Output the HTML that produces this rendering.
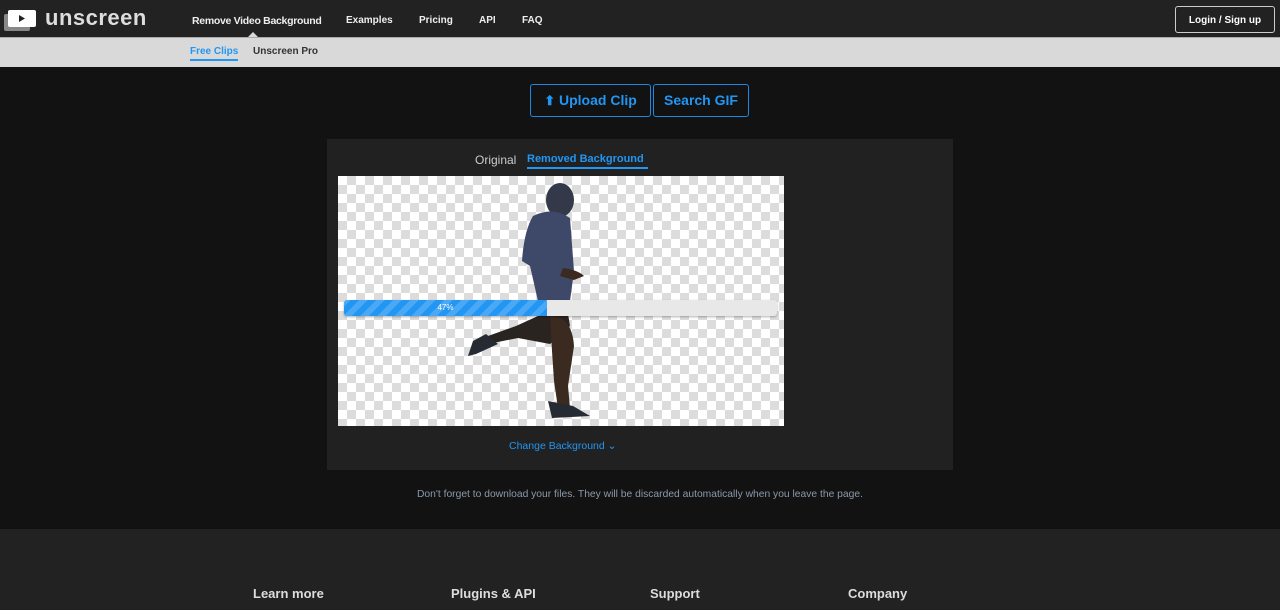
<!DOCTYPE html>
<html><head><meta charset="utf-8"><style>
*{margin:0;padding:0;box-sizing:border-box}
body{width:1280px;height:610px;overflow:hidden;background:#121212;font-family:"Liberation Sans",sans-serif;position:relative}
.top{position:absolute;left:0;top:0;width:1280px;height:37px;background:#222}
.sub{position:absolute;left:0;top:37px;width:1280px;height:30px;background:#d9d9d9;border-top:1px solid #aaa}
.a{position:absolute;font-size:10px;font-weight:bold;white-space:nowrap}
.panel{position:absolute;left:327px;top:139px;width:626px;height:331px;background:#212121}
.img{position:absolute;left:338px;top:176px;width:446px;height:250px;background-color:#fff;
background-image:linear-gradient(45deg,#dcdcdc 25%,transparent 25%,transparent 75%,#dcdcdc 75%),linear-gradient(45deg,#dcdcdc 25%,transparent 25%,transparent 75%,#dcdcdc 75%);
background-size:18px 18px;background-position:0 0,9px 9px;overflow:hidden}
.btn{position:absolute;top:84px;height:33px;border:1px solid #1e88e5;border-radius:3px;color:#2196f3;font-size:14px;font-weight:bold;line-height:31px;text-align:center}
.foot{position:absolute;left:0;top:529px;width:1280px;height:81px;background:#222}
.fh{position:absolute;top:586px;color:#ddd;font-size:13px;font-weight:bold}
</style></head><body>
<div class="top"></div>
<svg style="position:absolute;left:4px;top:9px" width="34" height="22"><rect x="0" y="5" width="26" height="17" rx="2" fill="#888"/><rect x="4" y="1" width="28" height="17" rx="2" fill="#fff"/><path d="M15 6l6 3.5-6 3.5z" fill="#222"/></svg>
<div class="a" style="left:45px;top:5px;font-size:22px;color:#ddd;letter-spacing:0.5px">unscreen</div>
<div class="a" style="left:192px;top:15px;color:#eee;font-size:10.5px;letter-spacing:-0.3px">Remove Video Background</div>
<div class="a" style="left:346px;top:15px;color:#eee">Examples</div>
<div class="a" style="left:419px;top:15px;color:#eee">Pricing</div>
<div class="a" style="left:479px;top:15px;color:#eee">API</div>
<div class="a" style="left:522px;top:15px;color:#eee">FAQ</div>
<div style="position:absolute;left:248px;top:32px;width:0;height:0;border:5px solid transparent;border-bottom-color:#d9d9d9;border-top:0"></div>
<div style="position:absolute;left:1175px;top:6px;width:100px;height:27px;border:1px solid #ccc;border-radius:3px;color:#fff;font-size:10px;font-weight:bold;text-align:center;line-height:27px">Login / Sign up</div>
<div class="sub"></div>
<div class="a" style="left:190px;top:46px;color:#2196f3">Free Clips</div>
<div style="position:absolute;left:190px;top:59px;width:48px;height:2px;background:#2196f3"></div>
<div class="a" style="left:253px;top:46px;color:#333">Unscreen Pro</div>
<div class="btn" style="left:530px;width:121px"><span style="font-size:13px">&#x2B06;</span> Upload Clip</div>
<div class="btn" style="left:653px;width:96px">Search GIF</div>
<div class="panel"></div>
<div class="a" style="left:475px;top:153px;font-size:12px;font-weight:normal;color:#ccc">Original</div>
<div class="a" style="left:527px;top:153px;font-size:11px;color:#2196f3">Removed Background</div>
<div style="position:absolute;left:527px;top:167px;width:121px;height:2px;background:#2196f3"></div>
<div class="img">
<svg width="446" height="250" style="position:absolute;left:0;top:0">
<ellipse cx="222" cy="24" rx="14" ry="17" fill="#34394a"/>
<path d="M195 40 Q215 30 232 42 L236 95 L232 125 L200 125 L192 90 L184 85 Q186 55 195 40z" fill="#3e4868"/>
<path d="M200 125 L228 125 L232 150 L212 168 L180 162 L140 170 L135 178 L150 160 L178 150 L200 140z" fill="#2a2421"/>
<path d="M212 140 Q234 140 236 170 L230 210 L232 232 L220 232 L216 205 L214 175z" fill="#3a2a20"/>
<path d="M210 225 L235 230 L252 240 L214 242z" fill="#262a33"/>
<path d="M135 165 L148 158 L160 168 L138 178 L130 180z" fill="#262a33"/>
<path d="M225 92 Q240 94 246 100 L236 104 L222 100z" fill="#3a2a20"/>
</svg>
<div style="position:absolute;left:6px;top:124px;width:433px;height:16px;background:#e8e8e8;border-radius:3px;overflow:hidden;box-shadow:0 1px 2px rgba(0,0,0,.3)">
<div style="width:203px;height:100%;background:repeating-linear-gradient(-45deg,#2196f3 0 6px,#4aa8f5 6px 12px);color:#fff;font-size:8px;text-align:center;line-height:16px">47%</div></div>
</div>
<div class="a" style="left:509px;top:440px;color:#2196f3;font-weight:normal;font-size:10.5px">Change Background &#x2304;</div>
<div class="a" style="left:417px;top:489px;color:#8a9aaa;font-weight:normal;font-size:10.3px">Don't forget to download your files. They will be discarded automatically when you leave the page.</div>
<div class="foot"></div>
<div class="fh" style="left:253px">Learn more</div>
<div class="fh" style="left:451px">Plugins &amp; API</div>
<div class="fh" style="left:650px">Support</div>
<div class="fh" style="left:848px">Company</div>
</body></html>
